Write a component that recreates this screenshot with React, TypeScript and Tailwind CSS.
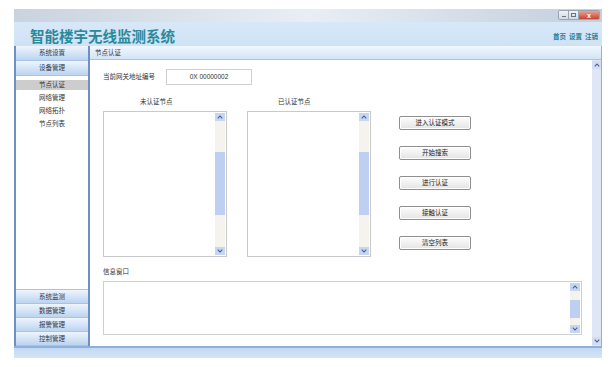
import React from "react";

const Up = () => (
  <svg width="6" height="4" viewBox="0 0 6 4"><path d="M0.8 3.4 L3 1 L5.2 3.4" fill="none" stroke="#4a5f86" strokeWidth="1.1" /></svg>
);
const Down = () => (
  <svg width="6" height="4" viewBox="0 0 6 4"><path d="M0.8 0.6 L3 3 L5.2 0.6" fill="none" stroke="#4a5f86" strokeWidth="1.1" /></svg>
);

function ListBox({ label, labelPad }: { label: string; labelPad: string }) {
  return (
    <div className="flex flex-col">
      <div className={`h-[14px] flex items-start ${labelPad}`}>
        <span className="text-[6.5px] leading-[8px] text-[#333]">{label}</span>
      </div>
      <div className="w-[124px] h-[146px] border border-[#c9c9c9] bg-white flex justify-end p-[1px]">
        <div className="w-[10px] flex flex-col bg-[#f4f3ee]">
          <div className="h-[8px] flex items-center justify-center bg-[#c5d6f2]"><Up /></div>
          <div className="h-[31px]" />
          <div className="h-[63px] bg-[#bdd0f1]" />
          <div className="flex-1" />
          <div className="h-[8px] flex items-center justify-center bg-[#c5d6f2]"><Down /></div>
        </div>
      </div>
    </div>
  );
}

function Btn({ children }: { children: React.ReactNode }) {
  return (
    <div className="w-[72px] h-[14px] border border-[#8f8f8f] rounded-[2px] bg-gradient-to-b from-[#fdfdfd] to-[#e4e4e4] flex items-center justify-center text-[6.5px] text-[#222] shadow-[inset_0_0_0_1px_#ffffff]">
      {children}
    </div>
  );
}

function NavHead({ children, h }: { children: React.ReactNode; h: string }) {
  return (
    <div className={`${h} flex items-center justify-center text-[6.5px] text-[#2c3a50] bg-gradient-to-b from-[#eef5fd] to-[#bcd4f0] border-b border-[#a9c3e6]`}>
      {children}
    </div>
  );
}

export default function App() {
  return (
    <div className="w-[612px] h-[367px] bg-white pt-[9px] pl-[14px] font-['Noto_Sans_CJK_SC','Liberation_Sans',sans-serif]">
      <div className="w-[588px] h-[349px] flex flex-col">
        {/* title bar */}
        <div className="h-[13px] bg-gradient-to-r from-[#c9d3de] via-[#e9eef4] to-[#c2cfdd] flex justify-end items-start pr-[2px]">
          <div className="flex mt-[1px] h-[10px] border border-[#9aa5b3] rounded-[2px] overflow-hidden">
            <div className="w-[10px] bg-gradient-to-b from-[#eef2f6] to-[#d3dae2] flex items-end justify-center pb-[2px] border-r border-[#9aa5b3]">
              <div className="w-[4px] h-[1px] bg-[#6b7280]" />
            </div>
            <div className="w-[10px] bg-gradient-to-b from-[#eef2f6] to-[#d3dae2] flex items-center justify-center border-r border-[#9aa5b3]">
              <div className="w-[5px] h-[4px] border border-[#6b7280]" />
            </div>
            <div className="w-[20px] bg-gradient-to-b from-[#e9a196] to-[#c7432f] flex items-center justify-center">
              <span className="text-[7px] leading-[7px] text-white font-bold font-['Liberation_Sans',sans-serif]">x</span>
            </div>
          </div>
        </div>
        {/* header */}
        <div className="h-[24px] bg-gradient-to-b from-[#d7e8f8] to-[#cfe2f5] flex items-end justify-between pl-[16px] pr-[4px]">
          <div className="text-[14.5px] leading-[16px] font-bold text-[#2a8a9c] mb-[2px]">智能楼宇无线监测系统</div>
          <div className="flex gap-[3px] text-[6.5px] text-[#1f7f95] font-bold mb-[4px]">
            <span>首页</span><span>设置</span><span>注销</span>
          </div>
        </div>
        {/* middle */}
        <div className="h-[300px] flex">
          {/* nav */}
          <div className="w-[76px] flex flex-col border-l-2 border-r-2 border-[#6e8fc2] bg-white">
            <NavHead h="h-[15px]">系统设置</NavHead>
            <NavHead h="h-[15px]">设备管理</NavHead>
            <div className="flex-1 flex flex-col pt-[4px] gap-[3px]">
              <div className="h-[10px] bg-[#cdcdcd] flex items-center justify-center text-[6.5px] text-[#333]">节点认证</div>
              <div className="h-[10px] flex items-center justify-center text-[6.5px] text-[#333]">网络管理</div>
              <div className="h-[10px] flex items-center justify-center text-[6.5px] text-[#333]">网络拓扑</div>
              <div className="h-[10px] flex items-center justify-center text-[6.5px] text-[#333]">节点列表</div>
            </div>
            <div className="border-t border-[#a9c3e6]">
              <NavHead h="h-[14px]">系统监测</NavHead>
              <NavHead h="h-[14px]">数据管理</NavHead>
              <NavHead h="h-[14px]">报警管理</NavHead>
              <NavHead h="h-[14px]">控制管理</NavHead>
            </div>
          </div>
          {/* content */}
          <div className="flex-1 flex flex-col border-r border-[#8fb0dc]">
            <div className="h-[14px] bg-gradient-to-b from-[#f1f7fe] to-[#d3e4f6] border-b border-[#a9c3e6] flex items-center pl-[5px] text-[6.5px] text-[#333]">节点认证</div>
            <div className="flex-1 flex bg-white">
              <div className="flex-1 flex flex-col pl-[13px] pt-[9px]">
                <div className="flex items-center h-[16px]">
                  <span className="w-[63px] text-[6.5px] text-[#333]">当前网关地址编号</span>
                  <div className="w-[86px] h-[16px] border border-[#cfcfcf] flex items-center justify-center text-[6.5px] text-[#333] font-['Liberation_Sans',sans-serif]">0X 00000002</div>
                </div>
                <div className="flex mt-[12px]">
                  <ListBox label="未认证节点" labelPad="pl-[37px]" />
                  <div className="w-[20px]" />
                  <ListBox label="已认证节点" labelPad="pl-[31px]" />
                  <div className="flex flex-col gap-[16px] ml-[28px] pt-[19px]">
                    <Btn>进入认证模式</Btn>
                    <Btn>开始搜索</Btn>
                    <Btn>进行认证</Btn>
                    <Btn>接触认证</Btn>
                    <Btn>清空列表</Btn>
                  </div>
                </div>
                <div className="mt-[10px] h-[14px] text-[6.5px] leading-[8px] text-[#333]">信息窗口</div>
                <div className="w-[479px] h-[54px] border border-[#cfcfcf] flex justify-end p-[1px]">
                  <div className="w-[10px] flex flex-col bg-[#f4f3ee]">
                    <div className="h-[8px] flex items-center justify-center bg-[#c5d6f2]"><Up /></div>
                    <div className="h-[9px]" />
                    <div className="h-[18px] bg-[#bdd0f1]" />
                    <div className="flex-1" />
                    <div className="h-[8px] flex items-center justify-center bg-[#c5d6f2]"><Down /></div>
                  </div>
                </div>
              </div>
              <div className="w-[9px] flex flex-col bg-[#dfe6f6] py-[1px]">
                <div className="h-[8px] flex items-center justify-center bg-[#d3ddf1]"><Up /></div>
                <div className="flex-1" />
                <div className="h-[8px] flex items-center justify-center bg-[#d3ddf1]"><Down /></div>
              </div>
            </div>
          </div>
        </div>
        {/* bottom */}
        <div className="h-[12px] bg-gradient-to-b from-[#c2d9f3] to-[#d4e5f7] border-t-2 border-[#8fb0dc]" />
      </div>
    </div>
  );
}
